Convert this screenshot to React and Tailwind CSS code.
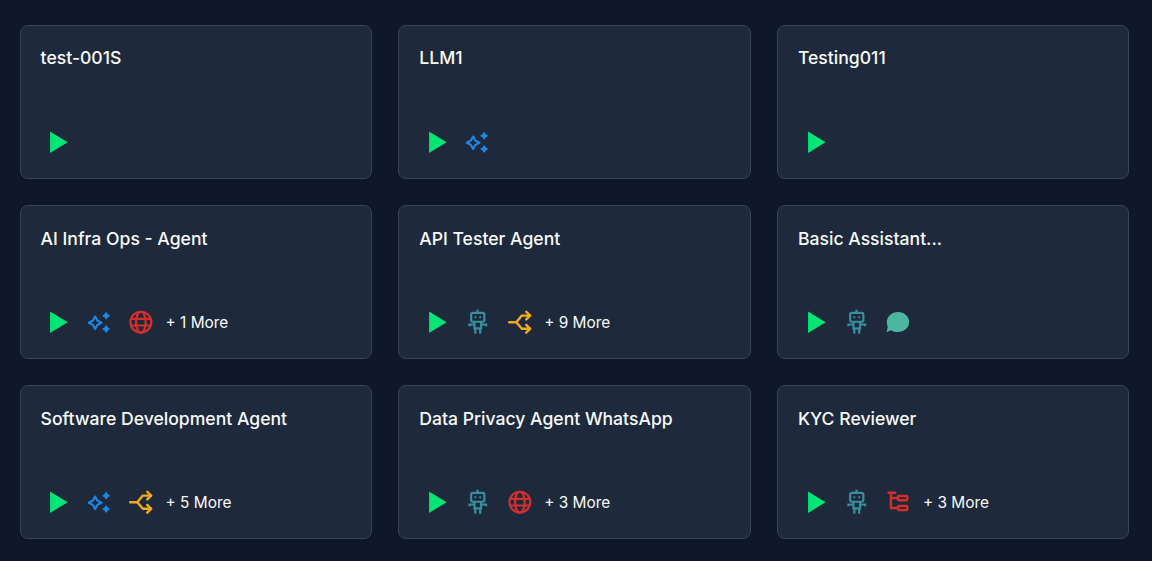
import { useState } from 'react';

const Play = () => (
  <svg width="26.4" height="26.4" viewBox="0 0 24 24" className="block">
    <path d="M4.6 2.2 L20.6 12 L4.6 21.8 Z" fill="#00e676" />
  </svg>
);

const Sparkle = () => (
  <svg width="26.4" height="26.4" viewBox="0 0 24 24" fill="#1e88e5" stroke="#1e88e5" strokeLinejoin="round" className="block">
    <path d="M7.4 6.8 L9.4 10.5 L13.2 12.5 L9.4 14.5 L7.4 18.2 L5.4 14.5 L1.6 12.5 L5.4 10.5 Z" fill="none" strokeWidth="1.9" />
    <path d="M17.4 3.2 L18.5 5 L20.3 6.1 L18.5 7.2 L17.4 9 L16.3 7.2 L14.5 6.1 L16.3 5 Z" strokeWidth="1" />
    <path d="M17.4 15.3 L18.5 17.1 L20.3 18.2 L18.5 19.3 L17.4 21.1 L16.3 19.3 L14.5 18.2 L16.3 17.1 Z" strokeWidth="1" />
  </svg>
);

const Globe = () => (
  <svg width="26.4" height="26.4" viewBox="0 0 24 24" fill="none" stroke="#d32f2f" strokeWidth="2" className="block">
    <circle cx="11.7" cy="12" r="9.5" />
    <ellipse cx="11.7" cy="12" rx="4.4" ry="9.5" />
    <path d="M2.7 9 H20.7 M2.7 15 H20.7" />
  </svg>
);

const Robot = () => (
  <svg width="26.4" height="26.4" viewBox="0 0 24 24" fill="none" stroke="#3a8f9e" strokeWidth="2" className="block">
    <path d="M11.4 0.6 V3.6" />
    <rect x="5.6" y="3.6" width="12" height="8" rx="1.5" />
    <path d="M8.6 7.6 H10.2 M13 7.6 H14.6" strokeWidth="1.8" />
    <path d="M8.6 11.6 V17.6 H14.6 V11.6" />
    <path d="M8.6 14.1 H4 V15.6 M14.6 14.1 H19.2 V15.6" />
    <path d="M9.4 17.6 V22.6 M13.8 17.6 V22.6" />
  </svg>
);

const Shuffle = () => (
  <svg width="26.4" height="26.4" viewBox="0 0 24 24" fill="none" stroke="#f2ab1c" strokeWidth="2.2" strokeLinecap="round" strokeLinejoin="round" className="block">
    <path d="M2 12 H8.5 L13.5 6 H21" />
    <path d="M8.5 12 L13.5 18 H21" />
    <path d="M17.5 2.5 L21 6 L17.5 9.5" />
    <path d="M17.5 14.5 L21 18 L17.5 21.5" />
  </svg>
);

const Chat = () => (
  <svg width="26.4" height="26.4" viewBox="0 0 24 24" fill="#4db6a0" className="block">
    <path d="M11.8 2.8 C17.5 2.8 22 6.8 22 11.9 C22 17 17.5 21 11.8 21 C9.4 21 7.2 20.4 5.4 19.3 L1.4 21.2 C1.9 19.2 2.4 17.5 2.4 16 C1.9 14.8 1.7 13.4 1.7 11.9 C1.7 6.8 6.2 2.8 11.8 2.8 Z" />
  </svg>
);

const Tree = () => (
  <svg width="26.4" height="26.4" viewBox="0 0 24 24" fill="none" stroke="#d32f2f" strokeWidth="2.2" strokeLinecap="round" strokeLinejoin="round" className="block">
    <path d="M3.2 3.4 H9.3" />
    <path d="M5.4 3.4 V17.3 H11.8" />
    <path d="M5.4 8.2 H11.8" />
    <rect x="11.8" y="6.4" width="8.5" height="3.8" rx="0.8" />
    <rect x="11.8" y="15.4" width="8.5" height="3.8" rx="0.8" />
  </svg>
);

const icons = { sparkle: Sparkle, globe: Globe, robot: Robot, shuffle: Shuffle, chat: Chat, tree: Tree };

const agents = [
  { name: 'test-001S', tools: [] },
  { name: 'LLM1', tools: ['sparkle'] },
  { name: 'Testing011', tools: [] },
  { name: 'AI Infra Ops - Agent', tools: ['sparkle', 'globe'], more: 1 },
  { name: 'API Tester Agent', tools: ['robot', 'shuffle'], more: 9 },
  { name: 'Basic Assistant...', tools: ['robot', 'chat'] },
  { name: 'Software Development Agent', tools: ['sparkle', 'shuffle'], more: 5 },
  { name: 'Data Privacy Agent WhatsApp', tools: ['robot', 'globe'], more: 3 },
  { name: 'KYC Reviewer', tools: ['robot', 'tree'], more: 3 },
];

const AgentCard = ({ agent }) => {
  return (
    <div className="h-[154px] rounded-lg border border-[#3a4454] bg-[#1e293b] px-[19.8px] pt-[20.4px] pb-[22.6px] flex flex-col justify-between">
      <h3 className="text-[17.6px] leading-6 font-medium text-[#f8fafc]">{agent.name}</h3>
      <div className="flex items-center gap-[15px] h-[26.4px] ml-[4.6px]">
        <Play />
        {agent.tools.map((tool, i) => {
          const Icon = icons[tool];
          return <Icon key={i} />;
        })}
        {agent.more && <span className="text-[15.4px] leading-5 text-[#f8fafc] -ml-[3.8px] mt-[1px]">+ {agent.more} More</span>}
      </div>
    </div>
  );
};

export default function App() {
  const [list] = useState(agents);
  return (
    <div className="h-[561px] overflow-hidden bg-[#0f172a] pt-[25px] pl-[19.8px] pr-[22.6px] font-['Inter',sans-serif]">
      <div className="grid grid-cols-3 gap-x-[26.4px] gap-y-[26.2px]">
        {list.map((agent) => (
          <AgentCard key={agent.name} agent={agent} />
        ))}
      </div>
    </div>
  );
}
